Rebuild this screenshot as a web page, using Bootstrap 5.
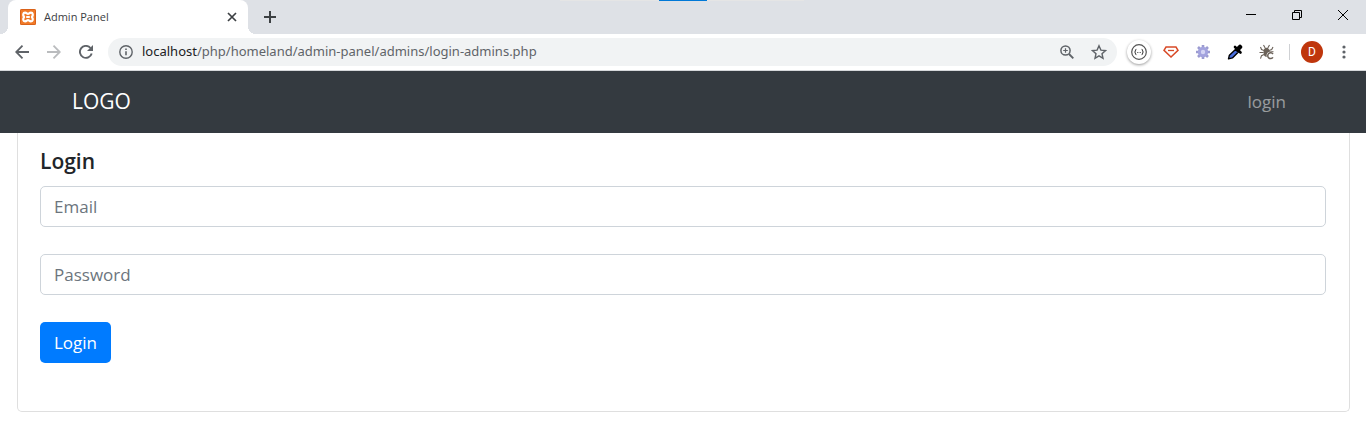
<!DOCTYPE html>
<html lang="en">
<head>
<meta charset="utf-8">
<meta name="viewport" content="width=device-width, initial-scale=1">
<title>Admin Panel</title>
<link href="https://cdn.jsdelivr.net/npm/bootstrap@5.3.0/dist/css/bootstrap.min.css" rel="stylesheet">
<style>
  body { font-family: "Open Sans", "Noto Sans", sans-serif; font-size: 17px; color: #212529; background: #fff; }
  svg { display: block; flex: none; }
  .plain-btn { border: 0; background: none; padding: 0; color: inherit; display: flex; align-items: center; justify-content: center; flex: none; }

  /* Window and tabs */
  .tab-strip { height: 34px; background: #dee1e6; color: #3c4043; }
  .accent-line { left: 560px; right: 562px; top: 0; height: 1px; background: #e5e5e5; }
  .accent-line span { width: 48px; height: 1px; margin-left: 99px; background: #0078d7; }
  .browser-tab { width: 240px; height: 34px; margin-left: 8px; padding: 0 8px 0 12px; background: #fff; border-radius: 8px 8px 0 0; font-size: 11px; }
  .browser-tab::before, .browser-tab::after { content: ""; position: absolute; bottom: 0; width: 8px; height: 8px; }
  .browser-tab::before { left: -8px; background: radial-gradient(circle at 0 0, #dee1e6 8px, #fff 8px); }
  .browser-tab::after { right: -8px; background: radial-gradient(circle at 100% 0, #dee1e6 8px, #fff 8px); }
  .tab-btn { width: 16px; height: 16px; }
  .new-tab { width: 28px; margin-left: 8px; }
  .win-btn { width: 46px; height: 29px; color: #000; }

  /* Toolbar */
  .toolbar { height: 37px; padding: 0 6px; border-bottom: 1px solid #d5d7da; color: #5f6368; }
  .tool-btn { width: 32px; height: 32px; }
  .address-bar { height: 28px; margin: 0 6px; padding: 0 2px 0 10px; border-radius: 14px; background: #f1f3f4; font-family: "Noto Sans", sans-serif; font-size: 13px; }
  .address-host { color: #202124; }
  .ext-disc { width: 24px; height: 24px; border-radius: 50%; box-shadow: 0 1px 3px rgba(0, 0, 0, .4); display: flex; align-items: center; justify-content: center; }
  .tool-rule { width: 1px; height: 16px; margin: 0 11px 0 6px; background: #cfd1d4; }
  .avatar { width: 22px; height: 22px; border-radius: 50%; background: #bf360c; color: #fff; font: 12px Roboto, sans-serif; }
  .menu-btn { width: 32px; margin: 0 0 0 5px; }

  /* Site */
  .site-nav { min-height: 62px; background: #343a40; padding: 0 72px; }
  .site-nav .navbar-brand { font-size: 21px; color: #fff; padding: 0; }
  .site-nav .nav-link { color: rgba(255, 255, 255, .5); padding: 0 9px; }
  .login-card { margin: 0 16px 30px 17px; padding: 14px 23px 48px 22px; border: 1px solid #dfdfdf; border-top: 0; border-radius: 0 0 5px 5px; }
  .login-title { font-size: 21px; font-weight: 600; line-height: 28px; margin: 0 0 11px; }
  .login-card .form-control { height: 41px; padding: 6px 13px; font-size: 17px; border-color: #ced4da; border-radius: 5px; margin-bottom: 27px; }
  .login-card .form-control::placeholder { color: #6c757d; }
  .login-card .btn { height: 41px; padding: 0 14px; font-size: 17px; background: #007bff; border: 0; border-radius: 5px; }
</style>
</head>
<body>
<header>
  <div class="tab-strip d-flex align-items-center position-relative">
    <div class="accent-line position-absolute d-flex"><span></span></div>
    <div class="browser-tab d-flex align-items-center position-relative">
      <svg width="16" height="16" viewBox="0 0 16 16"><rect width="16" height="16" rx="1.5" fill="#f07a28"/><rect x=".5" y=".5" width="15" height="15" rx="1" fill="none" stroke="#d9621a"/><path d="M5 3.700c1.800 0 1.800 1.300 3 1.300s1.200-1.300 3-1.300c2 0 2.400 2.300.9 4.300 1.500 2 1.100 4.300-.9 4.300-1.800 0-1.800-1.300-3-1.300s-1.200 1.300-3 1.300c-2 0-2.400-2.300-.9-4.300C2.600 6 3 3.700 5 3.700zM6.200 8h3.600" fill="none" stroke="#fff" stroke-width="2.200" stroke-linejoin="round"/></svg>
      <span class="ms-2 flex-grow-1">Admin Panel</span>
      <button class="plain-btn tab-btn" type="button" aria-label="Close tab"><svg width="10" height="10" viewBox="0 0 10 10"><path d="M1 1l8 8M9 1l-8 8" stroke="currentColor" stroke-width="1.700"/></svg></button>
    </div>
    <button class="plain-btn new-tab" type="button" aria-label="New tab"><svg width="12" height="12" viewBox="0 0 12 12"><path d="M6 0v12M0 6h12" stroke="currentColor" stroke-width="2"/></svg></button>
    <div class="d-flex ms-auto align-self-start">
      <button class="plain-btn win-btn" type="button" aria-label="Minimize"><svg width="10" height="11" viewBox="0 0 10 11"><path d="M0 5.500h10" stroke="currentColor"/></svg></button>
      <button class="plain-btn win-btn" type="button" aria-label="Restore"><svg width="10" height="11" viewBox="0 0 10 11"><path d="M.5 3.500h7v7h-7zM2.500 3.500v-2h7v7h-2" fill="none" stroke="currentColor"/></svg></button>
      <button class="plain-btn win-btn" type="button" aria-label="Close window"><svg width="10" height="10" viewBox="0 0 10 10"><path d="M0 0l10 10M10 0L0 10" stroke="currentColor"/></svg></button>
    </div>
  </div>

  <div class="toolbar d-flex align-items-center">
    <button class="plain-btn tool-btn" type="button" aria-label="Back"><svg width="14" height="14" viewBox="0 0 14 14"><path d="M14 7H1.500M7.500 .7L1.200 7l6.300 6.300" fill="none" stroke="currentColor" stroke-width="1.800"/></svg></button>
    <button class="plain-btn tool-btn" type="button" aria-label="Forward"><svg width="14" height="14" viewBox="0 0 14 14"><path d="M0 7h12.500M6.500 .7L12.800 7l-6.300 6.300" fill="none" stroke="#babcbe" stroke-width="1.800"/></svg></button>
    <button class="plain-btn tool-btn" type="button" aria-label="Reload"><svg width="14" height="14" viewBox="0 0 14 14"><path d="M12.700 8.500A6 6 0 1 1 11.500 3" fill="none" stroke="currentColor" stroke-width="1.900"/><path d="M14 0v6H8z" fill="currentColor"/></svg></button>
    <div class="address-bar d-flex align-items-center flex-grow-1">
      <svg width="16" height="16" viewBox="0 0 16 16"><circle cx="8" cy="8" r="6.200" fill="none" stroke="currentColor" stroke-width="1.400"/><path d="M8 7.200v4M8 4.500v1.500" stroke="currentColor" stroke-width="1.600"/></svg>
      <span class="ms-2 flex-grow-1"><span class="address-host">localhost</span>/php/homeland/admin-panel/admins/login-admins.php</span>
      <button class="plain-btn tool-btn" type="button" aria-label="Zoom"><svg width="14" height="14" viewBox="0 0 14 14"><circle cx="5.500" cy="5.500" r="4.600" fill="none" stroke="currentColor" stroke-width="1.500"/><path d="M9 9l4.300 4.300" stroke="currentColor" stroke-width="1.900"/><path d="M5.500 3.200v4.600M3.200 5.500h4.600" stroke="currentColor" stroke-width="1.200"/></svg></button>
      <button class="plain-btn tool-btn" type="button" aria-label="Bookmark"><svg width="16" height="16" viewBox="0 0 16 16"><path d="M8 1.800l1.900 4.300 4.600.5-3.500 3.100 1 4.600L8 11.900l-4 2.400 1-4.600L1.500 6.600l4.600-.5z" fill="none" stroke="currentColor" stroke-width="1.400"/></svg></button>
    </div>
    <button class="plain-btn tool-btn" type="button" aria-label="JSON viewer"><span class="ext-disc"><svg width="16" height="16" viewBox="0 0 16 16"><circle cx="8" cy="8" r="7.300" fill="none" stroke="#555" stroke-width="1.200"/><path d="M5.400 5.200c-1.400 0-.5 2.600-1.900 2.800 1.400.2.500 2.800 1.900 2.800M10.600 5.200c1.400 0 .5 2.600 1.900 2.800-1.400.2-.5 2.800-1.900 2.800" fill="none" stroke="#444" stroke-width="1.100"/><path d="M6 8.500h1M7.500 8.500h1M9 8.500h1" stroke="#777"/></svg></span></button>
    <button class="plain-btn tool-btn" type="button" aria-label="Gem extension"><svg width="16" height="16" viewBox="0 0 16 16"><path d="M3 3h10l2 3.300L8 13 1 6.300z" fill="none" stroke="#d84a27" stroke-width="1.500"/><path d="M5 6.500h6" stroke="#d84a27" stroke-width="1.300"/></svg></button>
    <button class="plain-btn tool-btn" type="button" aria-label="Settings extension"><svg width="16" height="16" viewBox="0 0 16 16"><path d="M8 1v14M1 8h14M3 3l10 10M13 3L3 13" stroke="#9b9bd0" stroke-width="2.600"/><circle cx="8" cy="8" r="5.200" fill="#a3a3de"/><circle cx="8" cy="8" r="2.200" fill="#d4d4f4"/></svg></button>
    <button class="plain-btn tool-btn" type="button" aria-label="Color picker"><svg width="16" height="16" viewBox="0 0 16 16"><path d="M8.700 5.200l2.700 2.700-6 6-3.900 1 .9-3.700z" fill="#4a6fe0" stroke="#000" stroke-width="1.400" stroke-linejoin="round"/><path d="M8 3l5.500 5.500" stroke="#000" stroke-width="2.600" stroke-linecap="round"/><path d="M10.500 5.500l2.500-2.500" stroke="#000" stroke-width="4.500" stroke-linecap="round"/></svg></button>
    <button class="plain-btn tool-btn" type="button" aria-label="Bug extension"><svg width="16" height="16" viewBox="0 0 16 16"><ellipse cx="7.500" cy="8.300" rx="3" ry="4.600" fill="#6b6259"/><path d="M4.500 1l1.700 3M10.500 1L8.800 4M1.500 3l1 2.500L5 6.500M14 3l-1.300 2.500L10 6.500M.5 8.500h4M10 7.700h4.500M5 10.500l-2.500 1.200-1 3" fill="none" stroke="#6b6259" stroke-width="1.100"/><circle cx="11.500" cy="11.700" r="3.900" fill="#fff"/><path d="M14 10a2.900 2.900 0 1 0 0 3.400" fill="none" stroke="#6b6259" stroke-width="1.500"/></svg></button>
    <span class="tool-rule"></span>
    <button class="plain-btn avatar" type="button" aria-label="Profile D">D</button>
    <button class="plain-btn tool-btn menu-btn" type="button" aria-label="Menu"><svg width="4" height="14" viewBox="0 0 4 14" fill="currentColor"><circle cx="2" cy="2" r="1.600"/><circle cx="2" cy="7" r="1.600"/><circle cx="2" cy="12" r="1.600"/></svg></button>
  </div>
</header>

<nav class="navbar navbar-expand site-nav" data-bs-theme="dark">
  <a class="navbar-brand" href="#">LOGO</a>
  <ul class="navbar-nav ms-auto">
    <li class="nav-item"><a class="nav-link" href="#">login</a></li>
  </ul>
</nav>

<main>
  <form class="login-card">
    <h1 class="login-title">Login</h1>
    <input class="form-control" type="email" id="email" placeholder="Email" aria-label="Email">
    <input class="form-control" type="password" id="password" placeholder="Password" aria-label="Password">
    <button class="btn btn-primary" type="submit">Login</button>
  </form>
</main>
<script src="https://cdn.jsdelivr.net/npm/bootstrap@5.3.0/dist/js/bootstrap.bundle.min.js"></script>
</body>
</html>
